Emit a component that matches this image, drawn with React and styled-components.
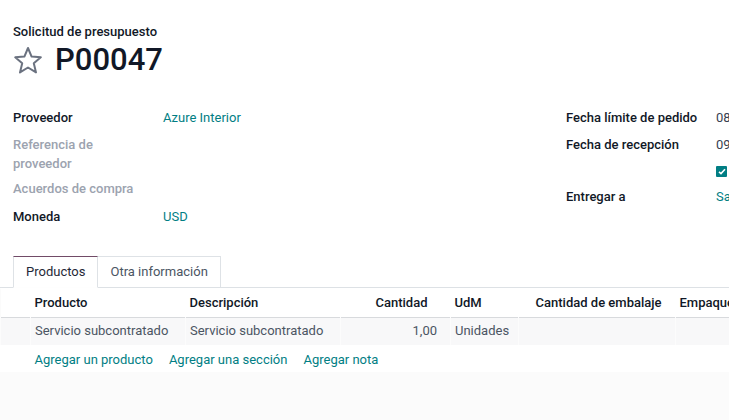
import React from 'react';
import styled, { createGlobalStyle } from 'styled-components';

const GlobalStyle = createGlobalStyle`
  body {
    margin: 0;
    background: #ffffff;
    font-family: Roboto, "Noto Sans", "Liberation Sans", sans-serif;
    font-size: 13px;
    color: #374151;
    overflow: hidden;
  }
`;

const Sheet = styled.div`
  width: 729px;
  height: 420px;
  overflow: hidden;
  display: flex;
  flex-direction: column;
`;

const Header = styled.div`
  padding: 22px 13px 0;
`;

const Subtitle = styled.div`
  font-size: 13px;
  font-weight: 500;
  line-height: 19px;
  color: #111827;
`;

const TitleRow = styled.div`
  display: flex;
  align-items: center;
  gap: 12px;
  height: 38px;
`;

const Title = styled.h1`
  margin: 0;
  font-size: 31px;
  font-weight: 500;
  line-height: 38px;
  color: #111827;
`;

const Groups = styled.div`
  display: grid;
  grid-template-columns: 553px 400px;
  padding: 25px 13px 0;
`;

const Group = styled.div`
  display: flex;
  flex-direction: column;
`;

const Row = styled.div`
  display: grid;
  grid-template-columns: 150px 1fr;
  padding: ${p => p.pad || '4px 0 3px'};
  line-height: 19px;
  white-space: nowrap;
`;

const Label = styled.div`
  font-weight: 500;
  color: ${p => (p.muted ? '#9ca3af' : '#111827')};
  white-space: normal;
  width: ${p => (p.narrow ? '90px' : 'auto')};
`;

const Value = styled.div`
  color: ${p => (p.link ? '#017e84' : '#374151')};
`;

const Check = styled.span`
  display: flex;
  align-items: center;
  justify-content: center;
  width: 11px;
  height: 11px;
  margin-top: 9px;
  border-radius: 1px;
  background: #017e84;
`;

const Notebook = styled.div`
  margin-top: 27px;
  border-bottom: 1px solid #dee2e6;
  padding: 0 13px;
  display: flex;
`;

const Tab = styled.div`
  height: 30px;
  line-height: 29px;
  padding: 0 12px;
  margin-bottom: -1px;
  border: 1px solid #dee2e6;
  border-top-color: ${p => (p.active ? '#714b67' : '#dee2e6')};
  border-bottom-color: ${p => (p.active ? '#ffffff' : '#dee2e6')};
  border-left-width: ${p => (p.first ? '1px' : '0')};
  background: #ffffff;
  color: ${p => (p.active ? '#1f2937' : '#4b5563')};
  font-size: 13px;
`;

const Table = styled.table`
  border-collapse: collapse;
  table-layout: fixed;
  width: 875px;
`;

const HeadRow = styled.tr`
  height: 29px;
  border-bottom: 1px solid #d8dadd;
  box-shadow: 0 1px 2px rgba(0, 0, 0, 0.06);
`;

const Th = styled.th`
  padding: 1px ${p => p.padRight || 4}px 0 4px;
  text-align: ${p => (p.num ? 'right' : 'left')};
  font-weight: 500;
  color: #111827;
  white-space: nowrap;
  overflow: hidden;
`;

const DataRow = styled.tr`
  height: 28px;
  background: #f8f8f9;
`;

const Td = styled.td`
  padding: 0 ${p => (p.num ? '13px' : '4px')} 1px 4px;
  text-align: ${p => (p.num ? 'right' : 'left')};
  color: #4b5563;
  white-space: nowrap;
  overflow: hidden;
  border-left: 1px solid #fcfcfc;
`;

const LinksRow = styled.tr`
  height: 27px;
  background: #ffffff;
`;

const LinksCell = styled.td`
  padding: 1px 4px 0;
`;

const Links = styled.div`
  display: flex;
  gap: 16px;
`;

const Link = styled.span`
  color: #017e84;
  white-space: nowrap;
`;

const Filler = styled.div`
  flex: 1;
  background: #fbfbfb;
`;

const StarIcon = () => (
  <svg width="30" height="29" viewBox="0 0 30 29">
    <polygon
      points="15,2 18.6,10.6 27.8,11.3 20.8,17.3 23,26.4 15,21.5 7,26.4 9.2,17.3 2.2,11.3 11.4,10.6"
      fill="none"
      stroke="#6b7280"
      strokeWidth="2"
      strokeLinejoin="round"
    />
  </svg>
);

const columns = [
  { key: 'handle', width: 30, label: '' },
  { key: 'product', width: 155, label: 'Producto' },
  { key: 'desc', width: 155, label: 'Descripción' },
  { key: 'qty', width: 110, label: 'Cantidad', num: true, padRight: 23 },
  { key: 'uom', width: 68, label: 'UdM' },
  { key: 'pack', width: 157, label: 'Cantidad de embalaje', num: true, padRight: 14 },
  { key: 'packaging', width: 200, label: 'Empaquetado' },
];

export default function App() {
  return (
    <Sheet>
      <GlobalStyle />
      <Header>
        <Subtitle>Solicitud de presupuesto</Subtitle>
        <TitleRow>
          <StarIcon />
          <Title>P00047</Title>
        </TitleRow>
      </Header>

      <Groups>
        <Group>
          <Row>
            <Label>Proveedor</Label>
            <Value link>Azure Interior</Value>
          </Row>
          <Row pad="5px 0 3px">
            <Label muted narrow>Referencia de proveedor</Label>
            <Value />
          </Row>
          <Row pad="3px 0 3px">
            <Label muted>Acuerdos de compra</Label>
            <Value />
          </Row>
          <Row pad="6px 0 3px">
            <Label>Moneda</Label>
            <Value link>USD</Value>
          </Row>
        </Group>
        <Group>
          <Row>
            <Label>Fecha límite de pedido</Label>
            <Value>08/07/2024 10:49:13</Value>
          </Row>
          <Row pad="5px 0 3px">
            <Label>Fecha de recepción</Label>
            <Value>09/07/2024 10:49:13</Value>
          </Row>
          <Row pad="0 0 6px">
            <Label />
            <Value>
              <Check>
                <svg width="8" height="7" viewBox="0 0 8 7">
                  <path d="M1 3.8 L3 5.6 L7 1.2" fill="none" stroke="#fff" strokeWidth="1.6" />
                </svg>
              </Check>
            </Value>
          </Row>
          <Row>
            <Label>Entregar a</Label>
            <Value link>San Francisco: Recepciones</Value>
          </Row>
        </Group>
      </Groups>

      <Notebook>
        <Tab active first>Productos</Tab>
        <Tab>Otra información</Tab>
      </Notebook>

      <Table>
        <colgroup>
          {columns.map(c => (
            <col key={c.key} style={{ width: c.width }} />
          ))}
        </colgroup>
        <thead>
          <HeadRow>
            {columns.map(c => (
              <Th key={c.key} num={c.num} padRight={c.padRight}>{c.label}</Th>
            ))}
          </HeadRow>
        </thead>
        <tbody>
          <DataRow>
            <Td />
            <Td>Servicio subcontratado</Td>
            <Td>Servicio subcontratado</Td>
            <Td num>1,00</Td>
            <Td>Unidades</Td>
            <Td num />
            <Td />
          </DataRow>
          <LinksRow>
            <td />
            <LinksCell colSpan={6}>
              <Links>
                <Link>Agregar un producto</Link>
                <Link>Agregar una sección</Link>
                <Link>Agregar nota</Link>
              </Links>
            </LinksCell>
          </LinksRow>
        </tbody>
      </Table>
      <Filler />
    </Sheet>
  );
}
